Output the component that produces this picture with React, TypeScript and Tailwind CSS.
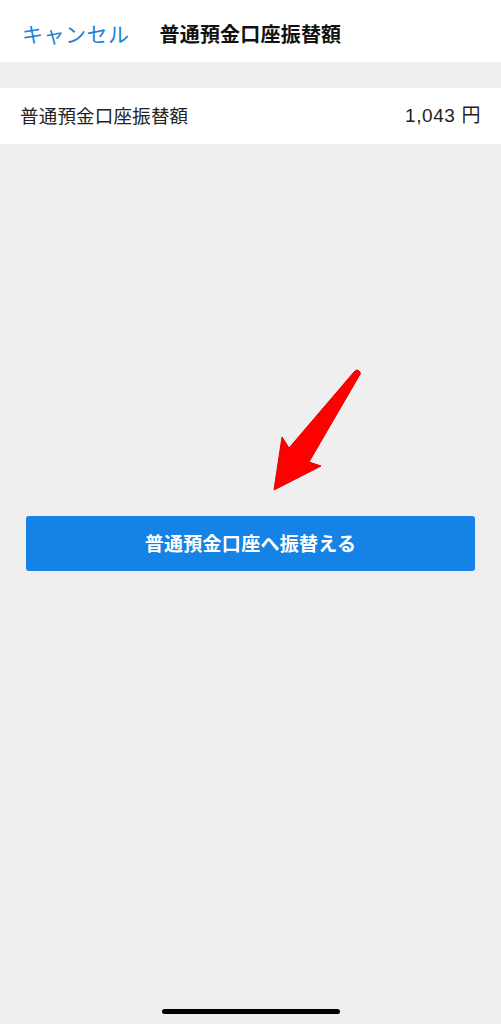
export default function App() {
  return (
    <div
      className="relative flex flex-col w-[501px] h-[1024px] bg-[#efefef] overflow-hidden"
      style={{ fontFamily: '"Noto Sans CJK JP", "Noto Sans", sans-serif' }}
    >
      {/* Header */}
      <div className="flex items-center h-[62px] bg-white pl-[22px] pt-[6px]">
        <span className="text-[21px] text-[#1a82d8] tracking-[0.5px]">キャンセル</span>
        <span className="ml-[30px] text-[20px] font-semibold text-[#111] tracking-[0.2px]">普通預金口座振替額</span>
      </div>

      <div className="h-[26px]" />

      {/* Amount row */}
      <div className="flex items-center justify-between h-[56px] bg-white px-[20px]">
        <span className="text-[18.5px] text-[#222] tracking-[0.2px]">普通預金口座振替額</span>
        <span className="text-[19px] text-[#222] tracking-[0.6px]" style={{ fontFamily: '"Liberation Sans", "Noto Sans CJK JP", sans-serif' }}>
          1,043 円
        </span>
      </div>

      {/* Button */}
      <div className="mt-[372px] px-[26px]">
        <button className="w-full h-[55px] rounded-[3px] bg-[#1583e5] text-white text-[19px] font-bold tracking-[0.3px]">
          普通預金口座へ振替える
        </button>
      </div>

      {/* Annotation arrow */}
      <svg
        className="absolute left-[266px] top-[364px]"
        width="100"
        height="132"
        viewBox="266 364 100 132"
      >
        <path
          d="M354,372 Q357,368 360,372 Q361,374 359,376 L309,462 L321,466 L274,490 L282,437 L289,448 Z"
          fill="#ff0000"
          stroke="#e00000"
          strokeWidth="1"
          strokeLinejoin="round"
        />
      </svg>

      {/* Home indicator */}
      <div className="absolute left-[162px] bottom-[10px] w-[178px] h-[5px] rounded-full bg-black" />
    </div>
  )
}
